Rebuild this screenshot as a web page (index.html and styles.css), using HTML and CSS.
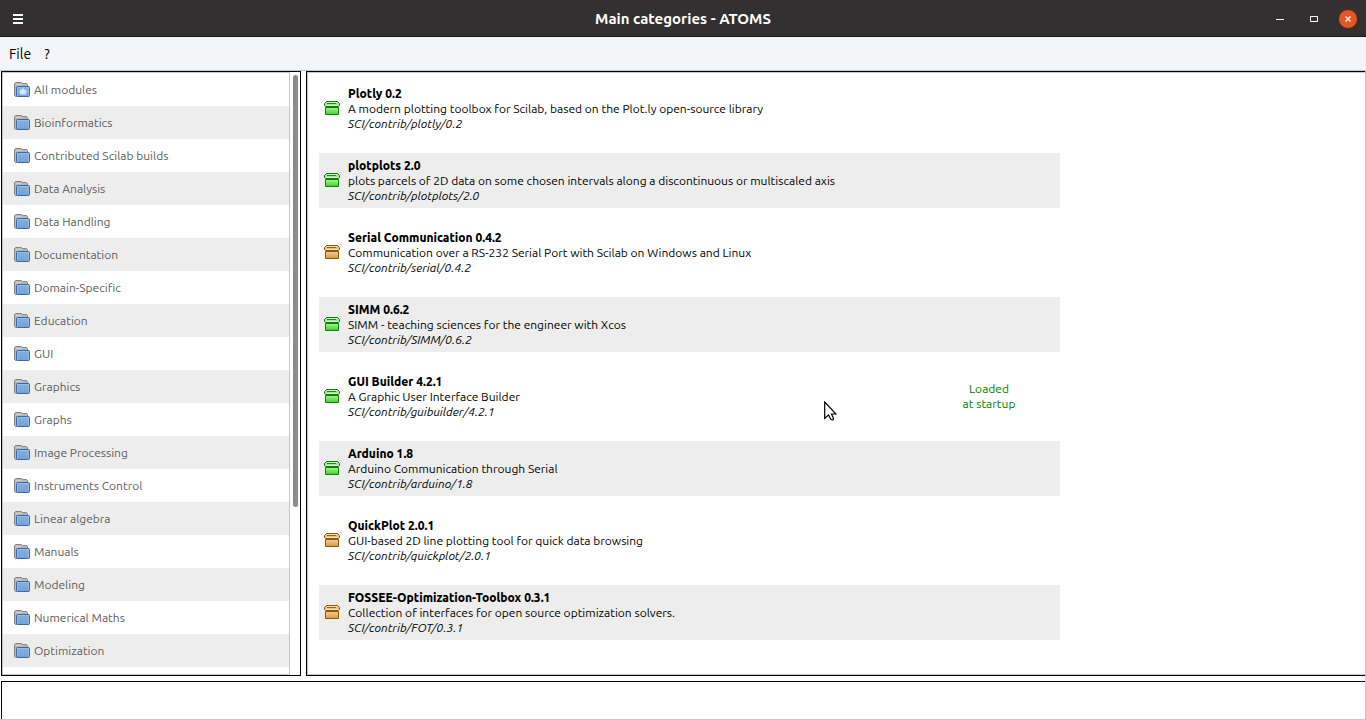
FILE: index.html
```html
<!DOCTYPE html>
<html lang="en">
<head>
<meta charset="utf-8">
<title>Main categories - ATOMS</title>
<link rel="stylesheet" href="styles.css">
</head>
<body>
<svg class="symbols" aria-hidden="true">
  <defs>
    <linearGradient id="blue" x1="0" y1="0" x2="0" y2="1"><stop offset="0" stop-color="#86b0e0"/><stop offset="1" stop-color="#74a1d8"/></linearGradient>
    <linearGradient id="green" x1="0" y1="0" x2="0" y2="1"><stop offset="0" stop-color="#a6f09b"/><stop offset="1" stop-color="#3fd02c"/></linearGradient>
    <linearGradient id="orange" x1="0" y1="0" x2="0" y2="1"><stop offset="0" stop-color="#f5cb97"/><stop offset="1" stop-color="#dc9848"/></linearGradient>
    <symbol id="folder" viewBox="0 0 16 16">
      <path d="M.5 13.500V1.500L1.500 .5H7.500L8.500 1.500H12.500L13.500 2.500V12H2.500V14.500H1.500Z" fill="#b8b8b8" stroke="#858585"/>
      <path d="M2 2.500H7" stroke="#d0d0d0"/>
      <rect x="2.500" y="4.500" width="13" height="10" rx="1" fill="url(#blue)" stroke="#3668aa"/>
      <path d="M3.500 13.500V5.500H14.500V13.500" fill="none" stroke="#a9c8ec" opacity=".6"/>
    </symbol>
    <symbol id="home-folder" viewBox="0 0 16 16">
      <use href="#folder"/>
      <path d="M9 6L13.500 10H12V12.500H6V10H4.500Z" fill="#d5e4f6"/>
    </symbol>
    <symbol id="box-green" viewBox="0 0 16 16">
      <path d="M1.500 6.500H14.500V13.500H1.500Z" fill="url(#green)" stroke="#138008"/>
      <path d="M.5 4.500V2.500L2.500 .5H13.500L15.500 2.500V4.500L14.500 5.500H1.500Z" fill="#a9dfa0" stroke="#138008"/>
      <path d="M2 4.500H14" stroke="#d9f5d4"/>
      <path d="M3 2.500H12" stroke="#26851c"/>
      <path d="M3 1.500H13" stroke="#c3eebd"/>
    </symbol>
    <symbol id="box-orange" viewBox="0 0 16 16">
      <path d="M1.500 6.500H14.500V13.500H1.500Z" fill="url(#orange)" stroke="#8f5902"/>
      <path d="M.5 4.500V2.500L2.500 .5H13.500L15.500 2.500V4.500L14.500 5.500H1.500Z" fill="#e9bf8c" stroke="#8f5902"/>
      <path d="M2 4.500H14" stroke="#fae3c5"/>
      <path d="M3 2.500H12" stroke="#96621b"/>
      <path d="M3 1.500H13" stroke="#f4d9b5"/>
    </symbol>
  </defs>
</svg>
<div class="window">
  <header class="titlebar">
    <div class="titlebar-side">
      <button class="window-button" type="button" aria-label="Window menu"><svg width="10" height="10" viewBox="0 0 10 10"><path d="M0 1H10M0 5H10M0 9H10" stroke="#fff" stroke-width="2"/></svg></button>
    </div>
    <h1 class="title">Main categories - ATOMS</h1>
    <div class="titlebar-side titlebar-controls">
      <button class="window-button" type="button" aria-label="Minimize"><svg width="8" height="8" viewBox="0 0 8 8"><path d="M0 4.500H8" stroke="#fff"/></svg></button>
      <button class="window-button" type="button" aria-label="Maximize"><svg width="8" height="6" viewBox="0 0 8 6"><path d="M.5 .5H7.500V5.500H.5Z" fill="none" stroke="#fff"/></svg></button>
      <button class="window-button window-close" type="button" aria-label="Close"><svg width="6" height="6" viewBox="0 0 6 6"><path d="M.5 .5L5.500 5.500M5.500 .5L.5 5.500" stroke="#fff" stroke-width="1.300"/></svg></button>
    </div>
  </header>
  <nav class="menubar" aria-label="Menu">
    <button class="menu" type="button">File</button>
    <button class="menu" type="button">?</button>
  </nav>
  <div class="panes">
    <div class="sidebar">
      <ul class="categories">
        <li><a class="category" href="#"><svg class="folder"><use href="#home-folder"/></svg>All modules</a></li>
        <li><a class="category" href="#"><svg class="folder"><use href="#folder"/></svg>Bioinformatics</a></li>
        <li><a class="category" href="#"><svg class="folder"><use href="#folder"/></svg>Contributed Scilab builds</a></li>
        <li><a class="category" href="#"><svg class="folder"><use href="#folder"/></svg>Data Analysis</a></li>
        <li><a class="category" href="#"><svg class="folder"><use href="#folder"/></svg>Data Handling</a></li>
        <li><a class="category" href="#"><svg class="folder"><use href="#folder"/></svg>Documentation</a></li>
        <li><a class="category" href="#"><svg class="folder"><use href="#folder"/></svg>Domain-Specific</a></li>
        <li><a class="category" href="#"><svg class="folder"><use href="#folder"/></svg>Education</a></li>
        <li><a class="category" href="#"><svg class="folder"><use href="#folder"/></svg>GUI</a></li>
        <li><a class="category" href="#"><svg class="folder"><use href="#folder"/></svg>Graphics</a></li>
        <li><a class="category" href="#"><svg class="folder"><use href="#folder"/></svg>Graphs</a></li>
        <li><a class="category" href="#"><svg class="folder"><use href="#folder"/></svg>Image Processing</a></li>
        <li><a class="category" href="#"><svg class="folder"><use href="#folder"/></svg>Instruments Control</a></li>
        <li><a class="category" href="#"><svg class="folder"><use href="#folder"/></svg>Linear algebra</a></li>
        <li><a class="category" href="#"><svg class="folder"><use href="#folder"/></svg>Manuals</a></li>
        <li><a class="category" href="#"><svg class="folder"><use href="#folder"/></svg>Modeling</a></li>
        <li><a class="category" href="#"><svg class="folder"><use href="#folder"/></svg>Numerical Maths</a></li>
        <li><a class="category" href="#"><svg class="folder"><use href="#folder"/></svg>Optimization</a></li>
      </ul>
      <div class="scrollbar"><div class="thumb"></div></div>
    </div>
    <main class="content">
      <ul class="modules">
        <li class="module"><svg class="box"><use href="#box-green"/></svg><div class="details"><h2 class="name">Plotly 0.2</h2><p>A modern plotting toolbox for Scilab, based on the Plot.ly open-source library</p><p class="path">SCI/contrib/plotly/0.2</p></div></li>
        <li class="module"><svg class="box"><use href="#box-green"/></svg><div class="details"><h2 class="name">plotplots 2.0</h2><p>plots parcels of 2D data on some chosen intervals along a discontinuous or multiscaled axis</p><p class="path">SCI/contrib/plotplots/2.0</p></div></li>
        <li class="module"><svg class="box"><use href="#box-orange"/></svg><div class="details"><h2 class="name">Serial Communication 0.4.2</h2><p>Communication over a RS-232 Serial Port with Scilab on Windows and Linux</p><p class="path">SCI/contrib/serial/0.4.2</p></div></li>
        <li class="module"><svg class="box"><use href="#box-green"/></svg><div class="details"><h2 class="name">SIMM 0.6.2</h2><p>SIMM - teaching sciences for the engineer with Xcos</p><p class="path">SCI/contrib/SIMM/0.6.2</p></div></li>
        <li class="module"><svg class="box"><use href="#box-green"/></svg><div class="details"><h2 class="name">GUI Builder 4.2.1</h2><p>A Graphic User Interface Builder</p><p class="path">SCI/contrib/guibuilder/4.2.1</p></div><p class="status">Loaded<br>at startup</p></li>
        <li class="module"><svg class="box"><use href="#box-green"/></svg><div class="details"><h2 class="name">Arduino 1.8</h2><p>Arduino Communication through Serial</p><p class="path">SCI/contrib/arduino/1.8</p></div></li>
        <li class="module"><svg class="box"><use href="#box-orange"/></svg><div class="details"><h2 class="name">QuickPlot 2.0.1</h2><p>GUI-based 2D line plotting tool for quick data browsing</p><p class="path">SCI/contrib/quickplot/2.0.1</p></div></li>
        <li class="module"><svg class="box"><use href="#box-orange"/></svg><div class="details"><h2 class="name">FOSSEE-Optimization-Toolbox 0.3.1</h2><p>Collection of interfaces for open source optimization solvers.</p><p class="path">SCI/contrib/FOT/0.3.1</p></div></li>
      </ul>
    </main>
  </div>
  <footer class="messages"></footer>
</div>
<svg class="pointer" viewBox="0 0 13 20" aria-hidden="true"><path d="M.7 1V17.500L4.500 14L7 18.500L9 18.800L9.500 17.500L7.500 13H12Z" fill="#fff" stroke="#000" stroke-width="1.200"/></svg>
</body>
</html>
```
FILE: styles.css
```css
* {
  box-sizing: border-box;
}

body {
  margin: 0;
  font: 12px/15px Ubuntu, "Noto Sans", sans-serif;
  color: #000;
  background: #fff;
}

h1, h2, p, ul {
  margin: 0;
  padding: 0;
}

ul {
  list-style: none;
}

button {
  font: inherit;
  color: inherit;
  border: 0;
  padding: 0;
  background: none;
}

.symbols {
  position: absolute;
  width: 0;
  height: 0;
}

.window {
  display: flex;
  flex-direction: column;
  height: 100vh;
  border-right: 1px solid #c4c6ca;
  border-bottom: 1px solid #c4c6ca;
}

.titlebar {
  display: flex;
  align-items: center;
  flex: none;
  height: 37px;
  margin-right: -1px;
  padding: 1px 8px 0;
  background: #333031;
  border-bottom: 1px solid #1f1d1e;
}

.titlebar-side {
  display: flex;
  flex: 1;
}

.titlebar-controls {
  justify-content: flex-end;
  gap: 14px;
}

.window-button {
  display: flex;
  align-items: center;
  justify-content: center;
  width: 20px;
  height: 20px;
}

.window-close {
  border: 1px solid #333031;
  border-radius: 50%;
  background: #e95420;
}

.title {
  font-size: 15px;
  line-height: 20px;
  font-weight: 700;
  color: #fff;
}

.menubar {
  display: flex;
  align-items: center;
  flex: none;
  gap: 13px;
  height: 34px;
  margin-right: -1px;
  padding: 0 9px;
  background: #f4f5f8;
  border-bottom: 1px solid #c4c6ca;
}

.menu {
  font-size: 14px;
  line-height: 20px;
}

.panes {
  display: flex;
  flex: 1;
  gap: 5px;
  min-height: 0;
  padding-left: 1px;
}

.sidebar {
  display: flex;
  flex: none;
  width: 300px;
  border: 1px solid #000;
}

.categories {
  flex: 1;
  overflow: hidden;
  border: 1px solid #c4c6ca;
}

.category {
  display: flex;
  align-items: center;
  gap: 4px;
  height: 33px;
  padding-left: 11px;
  color: #5c5c5c;
  text-decoration: none;
}

.categories li:nth-child(even),
.module:nth-child(even) {
  background: #ededed;
}

.folder {
  width: 16px;
  height: 16px;
}

.scrollbar {
  width: 10px;
  padding: 3px 2px 0 3px;
}

.thumb {
  height: 72%;
  border-radius: 3px;
  background: #8b8b8b;
}

.content {
  flex: 1;
  min-width: 0;
  overflow: hidden;
  border: 1px solid #000;
  border-right: 0;
  box-shadow: inset 1px 1px #c4c6ca, inset 0 -1px #c4c6ca;
}

.modules {
  display: flex;
  flex-direction: column;
  gap: 17px;
  max-width: 753px;
  padding: 9px 0 0 12px;
}

.module {
  display: flex;
  align-items: center;
  gap: 8px;
  padding: 5px;
}

.box {
  flex: none;
  width: 16px;
  height: 16px;
}

.details {
  flex: 1;
}

.name {
  font-size: 12px;
  line-height: 15px;
  font-weight: 800;
}

.path {
  font-style: italic;
}

.status {
  width: 132px;
  padding-bottom: 2px;
  color: #008000;
  text-align: center;
}

.messages {
  flex: none;
  height: 38px;
  margin: 5px 0 0 1px;
  border-top: 1px solid #000;
  border-left: 1px solid #000;
}

.pointer {
  position: absolute;
  left: 824px;
  top: 401px;
  width: 13px;
  height: 20px;
}
```
